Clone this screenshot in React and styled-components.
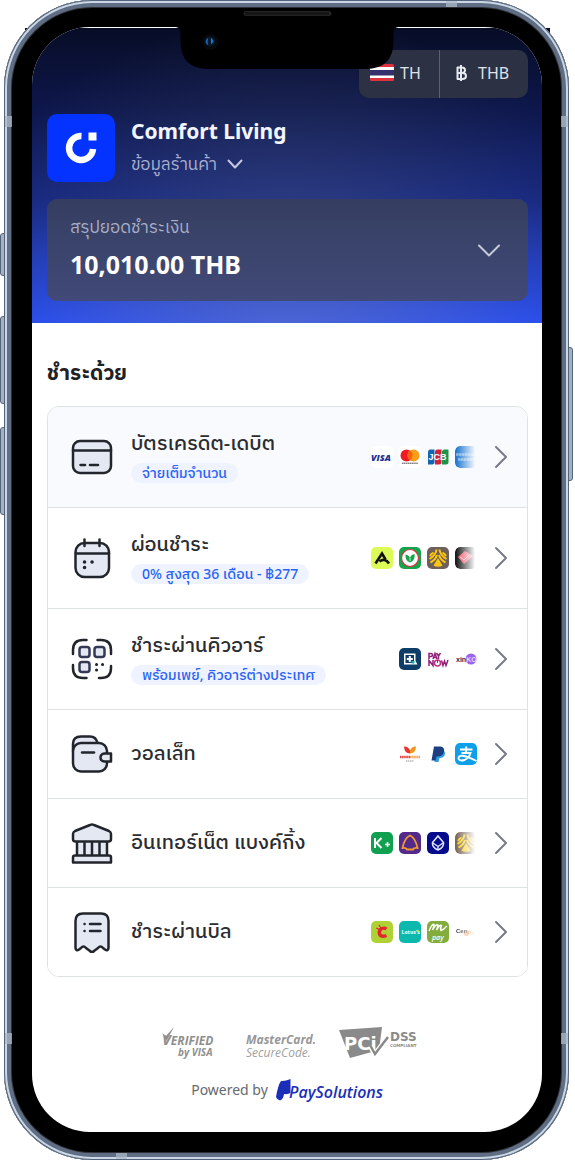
import styled, { createGlobalStyle, css } from "styled-components";

const GlobalStyle = createGlobalStyle`
  * {
    box-sizing: border-box;
  }

  body {
    margin: 0;
    background: #ffffff;
    color: #2b2d31;
    font-family: "Noto Sans", "IBM Plex Sans Thai", "Noto Sans Thai", sans-serif;
  }

  button {
    border: none;
    background: none;
    padding: 0;
    margin: 0;
    font: inherit;
    color: inherit;
    text-align: left;
    cursor: pointer;
  }
`;

/* ---------- device ---------- */

const Page = styled.div`
  padding: 0 6px 3px 4px;
`;

const Phone = styled.div`
  position: relative;
  isolation: isolate;
  padding: 27px 27px 28px 28px;
`;

const Shell = styled.div`
  position: absolute;
  inset: 0;
  z-index: -1;
  border-radius: 88px;
  background: #000000;
  box-shadow:
    inset 0 0 0 1px #54627a,
    inset 0 0 0 3px #cbd7e4,
    inset 0 0 0 7px #5f6e84,
    inset 0 0 0 8px #2c2f33;
`;

const ShellCorners = styled.div`
  position: absolute;
  z-index: -2;
  top: 28px;
  left: 21px;
  right: 19px;
  height: 6px;
  background: #060b28;
`;

const SideKey = styled.span`
  position: absolute;
  top: ${({ $top }) => $top}px;
  height: ${({ $height }) => $height}px;
  width: 5px;
  z-index: -2;
  background: #a3b2c1;
  border: 1px solid #56647a;
  ${({ $side }) =>
    $side === "left"
      ? css`
          left: -4px;
          border-radius: 3px 0 0 3px;
        `
      : css`
          right: -4px;
          border-radius: 0 3px 3px 0;
        `}
`;

const Band = styled.span`
  position: absolute;
  z-index: -1;
  background: rgba(170, 184, 200, 0.75);
  ${({ $edge, $at }) => {
    if ($edge === "left" || $edge === "right")
      return css`
        ${$edge}: 1px;
        ${$at}: 116px;
        width: 7px;
        height: 11px;
      `;
    return css`
      ${$edge}: 1px;
      ${$at}: 112px;
      width: 11px;
      height: 6px;
    `;
  }}
`;

const Notch = styled.svg`
  position: absolute;
  top: 0;
  left: 50%;
  transform: translateX(-50%);
  pointer-events: none;
`;

const Screen = styled.div`
  overflow: hidden;
  border-radius: 58px;
  padding-top: 1px;
  background: #ffffff;
`;

/* ---------- header ---------- */

const Header = styled.header`
  padding: 22px 14px 22px 15px;
  background:
    radial-gradient(
      ellipse 62% 75% at 50% 72%,
      rgba(96, 108, 130, 0.34),
      rgba(96, 108, 130, 0)
    ),
    radial-gradient(
      ellipse 50% 26% at 50% 100%,
      rgba(110, 130, 235, 0.4),
      rgba(110, 130, 235, 0)
    ),
    linear-gradient(
      180deg,
      #070d26 0%,
      #0d174c 28%,
      #152680 58%,
      #213dc0 80%,
      #294ef0 100%
    );
`;

const Toolbar = styled.div`
  display: flex;
  width: max-content;
  height: 48px;
  margin-left: auto;
  border-radius: 10px;
  background: #2c3144;
`;

const ToolButton = styled.button`
  display: flex;
  align-items: center;
  gap: ${({ $gap }) => $gap}px;
  width: ${({ $width }) => $width}px;
  padding: 0 0 3px ${({ $pad }) => $pad}px;
  color: #dfe2ec;
  font-size: 16px;

  & + & {
    border-left: 1px solid #5b6072;
  }
`;

const Store = styled.div`
  display: flex;
  align-items: center;
  gap: 16px;
  margin: 16px 0 17px;
`;

const StoreLogo = styled.svg`
  flex: none;
  border-radius: 10px;
  background: #0433ff;
`;

const StoreName = styled.h1`
  margin: 0;
  color: #f2f5ff;
  font-size: 21px;
  line-height: 32px;
  font-weight: 700;
`;

const StoreInfo = styled.button`
  display: flex;
  align-items: center;
  gap: 10px;
  color: #a9b0d0;
  font-size: 17px;
  line-height: 34px;
`;

const Summary = styled.button`
  display: flex;
  align-items: center;
  justify-content: space-between;
  width: 100%;
  height: 102px;
  padding: 0 27px 0 23px;
  border-radius: 10px;
  background: linear-gradient(180deg, #353e60, #414a78);
`;

const SummaryLabel = styled.span`
  display: block;
  color: #a9afc6;
  font-size: 17px;
  line-height: 28px;
`;

const Amount = styled.strong`
  display: block;
  color: #ffffff;
  font-size: 25px;
  line-height: 46px;
  font-weight: 700;
`;

/* ---------- payment list ---------- */

const Main = styled.main`
  padding: 33px 14px 0 15px;
`;

const Heading = styled.h2`
  margin: 0 0 18px;
  color: #1f2125;
  font-size: 21px;
  line-height: 32px;
  font-weight: 700;
`;

const Methods = styled.ul`
  margin: 0;
  padding: 0;
  list-style: none;
  overflow: hidden;
  border: 1px solid #dde2e5;
  border-radius: 12px;
`;

const Method = styled.li`
  & + & {
    border-top: 1px solid #dde2e5;
  }
`;

const MethodButton = styled.button`
  display: flex;
  align-items: center;
  width: 100%;
  height: ${({ $tall }) => ($tall ? 100 : 88)}px;
  padding: 0 19px 0 23px;
  background: ${({ $active }) => ($active ? "#f8fafd" : "#ffffff")};
`;

const MethodIcon = styled.svg`
  flex: none;
  margin-right: 18px;
  fill: #e3e8f3;
  stroke: #22252c;
  stroke-width: 2.5;
  stroke-linecap: round;
  stroke-linejoin: round;
`;

const MethodText = styled.span`
  flex: 1;
  min-width: 0;
  display: flex;
  flex-direction: column;
  align-items: flex-start;
  gap: 6px;
  padding-bottom: 2px;
`;

const MethodName = styled.span`
  font-size: 20px;
  line-height: 28px;
  font-weight: 500;
  white-space: nowrap;
`;

const Tag = styled.span`
  padding: 0 11px;
  border-radius: 10px;
  background: #eef3ff;
  color: #2a62f5;
  font-size: 14px;
  line-height: 20px;
  font-weight: 500;
  white-space: nowrap;
`;

const Brands = styled.span`
  display: flex;
  gap: 6px;
  margin-right: 17px;
`;

const Brand = styled.svg`
  width: 22px;
  height: 22px;
  border-radius: 5px;
  background: ${({ $bg }) => $bg || "transparent"};
  ${({ $fade }) =>
    $fade &&
    css`
      mask-image: linear-gradient(90deg, #000 5%, transparent 92%);
    `}
`;

/* ---------- footer ---------- */

const Footer = styled.footer`
  display: flex;
  flex-direction: column;
  align-items: center;
  gap: 16px;
  padding: 48px 14px 29px 15px;
`;

const Badges = styled.div`
  display: flex;
  align-items: center;
  gap: 24px;
`;

const Powered = styled.div`
  display: flex;
  align-items: center;
  gap: 8px;
  color: #66696e;
  font-size: 14px;
  line-height: 26px;
`;

const PayLink = styled.a`
  display: flex;
  color: #1a2fb8;
  text-decoration: none;
`;

const Chevron = ({ d, w, h, color, stroke = 2 }) => (
  <svg width={w} height={h} fill="none" stroke={color} strokeWidth={stroke} strokeLinecap="round" strokeLinejoin="round">
    <path d={d} />
  </svg>
);

const icons = {
  card: (
    <>
      <rect x="2" y="5" width="38" height="32" rx="7" />
      <path d="M2 14.5H40M9.500 29H14M19 29H27" />
    </>
  ),
  calendar: (
    <>
      <rect x="4.500" y="6" width="33.500" height="34" rx="9" />
      <path d="M5 16.500H38M13.500 2.500V9M28.500 2.500V9" />
      <path d="M13.500 25h.1M21 25h.1M13.500 30.500h.1" strokeWidth="3.500" />
    </>
  ),
  qr: (
    <>
      <path fill="none" d="M2 16V12Q2 2 12 2H15.500M26.500 2H30Q40 2 40 12V16M2 27V30Q2 40 12 40H15.500M28 40H30Q40 40 40 30V28" />
      <g stroke="#343a55">
        <rect x="8.500" y="9" width="10" height="10" rx="2.500" />
        <rect x="23.500" y="9" width="10" height="10" rx="2.500" />
        <rect x="8.500" y="24" width="10" height="10" rx="2.500" />
      </g>
      <path d="M25.500 26.500h.1M31.500 26.500h.1M25.500 32h.1" strokeWidth="3" />
    </>
  ),
  wallet: (
    <>
      <path d="M2 18V11Q2 3.500 10 3.500H19Q25 3.500 26.500 10" />
      <rect x="2" y="10" width="34" height="28.500" rx="8" />
      <path d="M11 19.500H23" />
      <path d="M33.500 20.500H40V28.500H33.500Q29.500 28 29.500 24.500T33.500 20.500Z" />
    </>
  ),
  bank: (
    <>
      <path d="M6 19H36V34H6Z" stroke="none" />
      <path d="M6 20V33M13.500 20V33M21 20V33M28.500 20V33M36 20V33" />
      <path d="M2 12Q2 10 4 9L19 3Q21 2 23 3L38 9Q40 10 40 12V17Q40 19.500 37.500 19.500H4.500Q2 19.500 2 17Z" />
      <path d="M4 33.500H38Q40 33.500 40 35.500V40.500H2V35.500Q2 33.500 4 33.500Z" />
    </>
  ),
  bill: (
    <>
      <path d="M4.500 10Q4.500 2.500 12 2.500H30Q37.500 2.500 37.500 10V37Q37 40.500 34 38.500L32 37Q29.500 34 27 37L23 40Q21 42 19 40L15 37Q12.500 34 10 37L8 38.500Q5 40.500 4.500 37Z" />
      <path d="M19 13H29.500M19 20H29.500M13.500 13h.1M13.500 20h.1" />
    </>
  ),
};

const brands = {
  visa: (
    <Brand key="visa" viewBox="0 0 22 22" $bg="#fff">
      <text x="0" y="14.500" fontFamily="Open Sans" fontSize="9" fontWeight="800" fontStyle="italic" fill="#1a2f8f">VISA</text>
    </Brand>
  ),
  mastercard: (
    <Brand key="mastercard" viewBox="0 0 22 22" $bg="#fff">
      <circle cx="7.500" cy="9.500" r="6" fill="#eb1c26" />
      <circle cx="14.500" cy="9.500" r="6" fill="#f79e1b" />
      <path d="M11 4.600a6 6 0 0 1 0 9.800a6 6 0 0 1 0-9.800Z" fill="#ff5f00" />
      <path d="M3 17.200H19" stroke="#444" strokeWidth="1" strokeDasharray="1.500 .4" />
    </Brand>
  ),
  jcb: (
    <Brand key="jcb" viewBox="0 0 22 22">
      <path d="M3.500 3.500H7.500V16Q7.500 18.500 5 18.500H1V6Q1 3.500 3.500 3.500Z" fill="#1465b0" />
      <path d="M10.500 3.500H14.500V16Q14.500 18.500 12 18.500H8V6Q8 3.500 10.500 3.500Z" fill="#d0213d" />
      <path d="M17.500 3.500H21.500V16Q21.500 18.500 19 18.500H15V6Q15 3.500 17.500 3.500Z" fill="#1f9447" />
      <text x="1.500" y="14" fontFamily="Liberation Sans" fontSize="9" fontWeight="700" fill="#fff">JCB</text>
    </Brand>
  ),
  amex: (
    <Brand key="amex" viewBox="0 0 22 22" $bg="#1f78d1" $fade>
      <path d="M1 8.500H20M3 13.500H20" stroke="#fff" strokeWidth="2.500" strokeDasharray="2.500 .4" opacity=".45" />
    </Brand>
  ),
  ascend: (
    <Brand key="ascend" viewBox="0 0 22 22" $bg="#dcfb57">
      <path d="M4.500 16.500L11 6.500L14.500 12.500M8.500 14.500Q14 10.500 18 16.500" fill="none" stroke="#111" strokeWidth="2.600" />
    </Brand>
  ),
  kbank: (
    <Brand key="kbank" viewBox="0 0 22 22" $bg="#12a54b">
      <circle cx="11" cy="11" r="8.500" fill="#fff" stroke="#d9333f" strokeWidth="1.200" />
      <path d="M11 15.500Q6 13.500 6.500 7.500Q10 8 11 11Q12 7.500 15.500 7Q16.500 13.500 11 15.500Z" fill="#12a54b" />
      <path d="M11 11V14" stroke="#fff" strokeWidth=".8" />
    </Brand>
  ),
  krungsri: (
    <Brand key="krungsri" viewBox="0 0 22 22" $bg="#6f5f5a">
      <g stroke="#fdc70c" fill="none" strokeWidth="2">
        <path d="M9.500 2.500Q9 8 2.500 12M12.500 2.500Q13 8 19.500 12M10 8Q8.500 13 3.500 15.500M12 8Q13.500 13 18.500 15.500" />
        <path d="M6.500 5.500Q4 7 3 9M15.500 5.500Q18 7 19 9" />
      </g>
      <path d="M11 11L15.500 18.500Q11 21 6.500 18.500Z" fill="#fdc70c" />
    </Brand>
  ),
  ktc: (
    <Brand key="ktc" viewBox="0 0 22 22" $bg="#1d1c1c" $fade>
      <path d="M3 10L10 4L18 9L9 17Z" fill="#f0566a" />
      <path d="M5 10L9 13L14 8" stroke="#fff" strokeWidth="1" fill="none" opacity=".6" />
    </Brand>
  ),
  promptpay: (
    <Brand key="promptpay" viewBox="0 0 22 22" $bg="#0e3d67">
      <path d="M5 5.500H16.500V13L18.500 16.500H5Z" fill="#fff" />
      <path d="M6.500 7H15V15H6.500Z" fill="#0e3d67" />
      <path d="M10.800 8V14M7.800 11H13.800" stroke="#fff" strokeWidth="2" />
      <path d="M12.500 13H15.500V15.500H12.500Z" fill="#17b0a2" />
    </Brand>
  ),
  paynow: (
    <Brand key="paynow" viewBox="0 0 22 22">
      <g fill="none" stroke="#8f2079" strokeWidth="1.500">
        <path d="M2 11V5.500H4Q5.500 5.500 5.500 7T4 8.500H2M6 11L8 5.500L10 11M7 9.500H9M9.500 5L11.500 8L13.500 5M11.500 8V11" />
        <path d="M2 18V12.500L6 17.500V12M14.500 12.500L16 17.500L17.500 13L19 17.500L21 12" />
        <circle cx="10.500" cy="15" r="3" stroke="#c2328a" />
        <path d="M10.500 12V15" strokeWidth="1" />
      </g>
    </Brand>
  ),
  xinko: (
    <Brand key="xinko" viewBox="0 0 22 22">
      <circle cx="16" cy="11" r="5.500" fill="#9b62f0" />
      <text x="1" y="13.500" fontFamily="Liberation Sans" fontSize="7" fontWeight="700" fill="#2b2b55">
        xin<tspan fill="#e7d8ff">KO</tspan>
      </text>
    </Brand>
  ),
  truemoney: (
    <Brand key="truemoney" viewBox="0 0 22 22">
      <path d="M5 3.500Q9 3 11 7.500L11 10.500Q5.500 10.500 5 3.500Z" fill="#e8362d" />
      <path d="M17 3.500Q13 3 11 7.500L11 10.500Q16.500 10.500 17 3.500Z" fill="#f7931d" />
      <path d="M1 14H11" stroke="#e2483d" strokeWidth="2.500" strokeDasharray="1.600 .5" />
      <path d="M11 14H21" stroke="#f5a45c" strokeWidth="2.500" strokeDasharray="1.600 .5" />
      <path d="M7 18H15" stroke="#999" strokeWidth="1" strokeDasharray="1.500 .5" />
    </Brand>
  ),
  paypal: (
    <Brand key="paypal" viewBox="0 0 22 22">
      <path d="M8.500 7H16Q19 9 17.500 12.500Q16 15 12.500 15L11.500 19H7.500Z" fill="#2a9be0" />
      <path d="M7 3.500H14Q18 4.500 17 9Q15.500 13.500 10.500 13.500H9.500L8.500 17.500H4.500Z" fill="#1d3f82" />
    </Brand>
  ),
  alipay: (
    <Brand key="alipay" viewBox="0 0 22 22" $bg="#0f9fe8">
      <g fill="none" stroke="#fff" strokeWidth="1.900">
        <path d="M5 6.500H17.500M11.200 3.500V10M6.500 10H15.500Q14 15 9.500 17Q4.500 18.500 3.500 15.500Q3.500 12.500 7.500 12.800Q12 13.200 21.500 18" />
      </g>
    </Brand>
  ),
  kplus: (
    <Brand key="kplus" viewBox="0 0 22 22" $bg="#10a050">
      <path d="M4 6V16M10.500 6L5.500 11L10.500 16" fill="none" stroke="#fff" strokeWidth="2" />
      <path d="M16.500 10V15M14 12.500H19" stroke="#fff" strokeWidth="1.500" />
    </Brand>
  ),
  scb: (
    <Brand key="scb" viewBox="0 0 22 22" $bg="#53298a">
      <path d="M11 3.500Q16.500 6 18.500 16Q15 15.500 14 17.500H8Q7 15.500 3.500 16Q5.500 6 11 3.500Z" fill="none" stroke="#f09a2e" strokeWidth="1.800" />
    </Brand>
  ),
  bbl: (
    <Brand key="bbl" viewBox="0 0 22 22" $bg="#060b8c">
      <path d="M11 4L16.500 10.500Q17 15.500 11 18Q5 15.500 5.500 10.500Z" fill="none" stroke="#dfe6ff" strokeWidth="1.600" />
      <path d="M6 11L11 14.500L16 11M11 14.500V18" fill="none" stroke="#dfe6ff" strokeWidth="1.400" />
    </Brand>
  ),
  bay: (
    <Brand key="bay" viewBox="0 0 22 22" $bg="#7b6a5c" $fade>
      <g stroke="#ffd21c" fill="none" strokeWidth="2">
        <path d="M9.500 2.500Q9 8 2.500 12M12.500 2.500Q13 8 19.500 12M10 8Q8.500 13 3.500 15.500M12 8Q13.500 13 18.500 15.500" />
        <path d="M6.500 5.500Q4 7 3 9M15.500 5.500Q18 7 19 9" />
      </g>
      <path d="M11 11L15.500 18.500Q11 21 6.500 18.500Z" fill="#ffd21c" />
    </Brand>
  ),
  bigc: (
    <Brand key="bigc" viewBox="0 0 22 22" $bg="#afd136">
      <path d="M15.500 8Q13.500 6.500 11 7.500Q7.500 9 8.500 13Q10 16.500 15.500 14.500" fill="none" stroke="#e3262d" strokeWidth="3.400" />
      <path d="M5 7L9 8.500M8 4L10 7" stroke="#e3262d" strokeWidth="1.200" />
    </Brand>
  ),
  lotus: (
    <Brand key="lotus" viewBox="0 0 22 22" $bg="#0bb8ae">
      <text x="2.500" y="12.800" fontFamily="Open Sans" fontSize="5" fontWeight="800" fill="#d7f7f2">Lotus's</text>
      <circle cx="19" cy="10" r="1.200" fill="#c6dc3c" />
    </Brand>
  ),
  mpay: (
    <Brand key="mpay" viewBox="0 0 22 22" $bg="#82ad3d">
      <path d="M2 10Q5 2.500 7 3.500Q7 6 5.500 9Q9 2.500 11 4Q11 6 9.500 9Q13 3 14.500 4.500Q13 8 14 9.500Q16 9 20 5" fill="none" stroke="#fff" strokeWidth="1.500" />
      <text x="5" y="18.500" fontFamily="Open Sans" fontSize="7" fontWeight="600" fontStyle="italic" fill="#fff">pay</text>
    </Brand>
  ),
  cenpay: (
    <Brand key="cenpay" viewBox="0 0 22 22" $fade>
      <circle cx="11.500" cy="12" r="3" fill="#f59c5a" opacity=".8" />
      <text x="1" y="12" fontFamily="Liberation Sans" fontSize="6" fontWeight="700" fill="#333">
        Cen<tspan dy="2" fill="#d9762f">Pay</tspan>
      </text>
    </Brand>
  ),
};

const methods = [
  { icon: "card", name: "บัตรเครดิต-เดบิต", tag: "จ่ายเต็มจำนวน", logos: ["visa", "mastercard", "jcb", "amex"], active: true },
  { icon: "calendar", name: "ผ่อนชำระ", tag: "0% สูงสุด 36 เดือน - ฿277", logos: ["ascend", "kbank", "krungsri", "ktc"] },
  { icon: "qr", name: "ชำระผ่านคิวอาร์", tag: "พร้อมเพย์, คิวอาร์ต่างประเทศ", logos: ["promptpay", "paynow", "xinko"] },
  { icon: "wallet", name: "วอลเล็ท", logos: ["truemoney", "paypal", "alipay"] },
  { icon: "bank", name: "อินเทอร์เน็ต แบงค์กิ้ง", logos: ["kplus", "scb", "bbl", "bay"] },
  { icon: "bill", name: "ชำระผ่านบิล", logos: ["bigc", "lotus", "mpay", "cenpay"] },
];

const StoreHeader = () => (
  <Header>
    <Toolbar>
      <ToolButton $width={80} $pad={11} $gap={6}>
        <svg width="24" height="17" viewBox="0 0 24 17">
          <rect width="24" height="17" rx="1.500" fill="#e0313f" />
          <rect y="3" width="24" height="11" fill="#fff" />
          <rect y="6" width="24" height="5.500" fill="#33306b" />
        </svg>
        TH
      </ToolButton>
      <ToolButton $width={89} $pad={15} $gap={11}>
        <svg width="12" height="18" viewBox="0 0 12 18" fill="none" stroke="#e8eaf2" strokeWidth="2">
          <path d="M2 3.500H7Q10 3.500 10 6.200T7 9H2M2 9H7.500Q11 9 11 12T7.500 15H2M2.500 3V15.500M6 1V17" />
        </svg>
        THB
      </ToolButton>
    </Toolbar>
    <Store>
      <StoreLogo width="68" height="68" viewBox="0 0 68 68">
        <path d="M34.500 22A12 12 0 1 0 46 35" fill="none" stroke="#fff" strokeWidth="6.500" />
        <rect x="41.500" y="18.500" width="8" height="8" fill="#fff" />
      </StoreLogo>
      <div>
        <StoreName>Comfort Living</StoreName>
        <StoreInfo>
          ข้อมูลร้านค้า
          <Chevron w={16} h={10} d="M1.500 1.500L8 8.500L14.500 1.500" color="#c3c9e0" />
        </StoreInfo>
      </div>
    </Store>
    <Summary>
      <span>
        <SummaryLabel>สรุปยอดชำระเงิน</SummaryLabel>
        <Amount>10,010.00 THB</Amount>
      </span>
      <Chevron w={24} h={13} d="M2 1.500L12 11.500L22 1.500" color="#c6cad8" />
    </Summary>
  </Header>
);

const PaymentMethods = () => (
  <Main>
    <Heading>ชำระด้วย</Heading>
    <Methods>
      {methods.map(({ icon, name, tag, logos, active }) => (
        <Method key={icon}>
          <MethodButton $tall={Boolean(tag)} $active={active}>
            <MethodIcon width="42" height="42" viewBox="0 0 42 42">
              {icons[icon]}
            </MethodIcon>
            <MethodText>
              <MethodName>{name}</MethodName>
              {tag && <Tag>{tag}</Tag>}
            </MethodText>
            <Brands>{logos.map((logo) => brands[logo])}</Brands>
            <Chevron w={14} h={24} d="M2 2L12 12L2 22" color="#777a88" />
          </MethodButton>
        </Method>
      ))}
    </Methods>
  </Main>
);

const PageFooter = () => (
  <Footer>
    <Badges>
      <svg width="60" height="36" viewBox="0 0 60 36" fill="#8f8f8f">
        <g fontFamily="Open Sans" fontWeight="700" fontStyle="italic">
          <text x="5" y="20" fontSize="12">
            <tspan fontSize="15">V</tspan>ERIFIED
          </text>
          <text x="21" y="31" fontSize="10">by VISA</text>
        </g>
        <path d="M5 8L9 11L17 2L9.500 16Z" />
      </svg>
      <svg width="74" height="36" viewBox="0 0 74 36" fontFamily="Open Sans" fontStyle="italic">
        <text x="5" y="19" fontSize="12" fontWeight="700" fill="#979797">MasterCard.</text>
        <text x="5" y="32" fontSize="12" fontWeight="400" fill="#a0a0a0">SecureCode.</text>
      </svg>
      <svg width="80" height="36" viewBox="0 0 80 36">
        <path d="M0 5L43 2L40 25L11 33Z" fill="#8a8a8a" />
        <text x="5" y="25" fontFamily="DejaVu Sans" fontSize="18" fontWeight="700" fill="#fff">PCi</text>
        <path d="M31 21L36 29L49 12" fill="none" stroke="#fff" strokeWidth="5" />
        <path d="M31 20L36 29L49 12" fill="none" stroke="#8a8a8a" strokeWidth="2.500" />
        <text x="51" y="16" fontFamily="DejaVu Sans" fontSize="12" fontWeight="700" fill="#8a8a8a">DSS</text>
        <text x="51" y="22" fontFamily="DejaVu Sans" fontSize="4" fontWeight="700" fill="#8a8a8a">COMPLIANT</text>
      </svg>
    </Badges>
    <Powered>
      Powered by
      <PayLink href="#" aria-label="PaySolutions">
        <svg width="108" height="26" viewBox="0 0 108 26" fill="currentColor">
          <path d="M5 4Q9 4.500 14.500 2V16Q12 17.500 8 17Q7.500 22 4 23.500Q1 23 0 20Q2 8 5 4Z" />
          <text x="13" y="21" fontFamily="Open Sans" fontSize="16" fontWeight="600" fontStyle="italic">PaySolutions</text>
        </svg>
      </PayLink>
    </Powered>
  </Footer>
);

const App = () => (
  <>
    <GlobalStyle />
    <Page>
      <Phone>
        <ShellCorners />
        <SideKey $side="left" $top={233} $height={43} />
        <SideKey $side="left" $top={316} $height={88} />
        <SideKey $side="left" $top={427} $height={88} />
        <SideKey $side="right" $top={347} $height={134} />
        <Shell />
        <Band $edge="left" $at="top" />
        <Band $edge="right" $at="top" />
        <Band $edge="left" $at="bottom" />
        <Band $edge="right" $at="bottom" />
        <Band $edge="top" $at="right" />
        <Band $edge="bottom" $at="left" />
        <Screen>
          <StoreHeader />
          <PaymentMethods />
          <PageFooter />
        </Screen>
        <Notch width="223" height="69" viewBox="0 0 223 69">
          <path d="M0 26H223V27Q218 27 218 33V41Q218 69 190 69H33Q5 69 5 41V33Q5 27 0 27Z" fill="#000" />
          <rect x="68" y="11" width="88" height="5" rx="2.500" fill="#232323" />
          <path d="M70 13.500H154" stroke="#0a0a0a" strokeWidth="3" strokeDasharray="1 1" />
          <circle cx="35" cy="42" r="8" fill="#08090c" />
          <circle cx="34.500" cy="41.500" r="5" fill="#071a30" />
          <path d="M32 38.500Q29.500 41.500 32 44.500M36 38.500Q39 41.500 36 43.500Z" fill="#1a78c8" stroke="#1a78c8" />
        </Notch>
      </Phone>
    </Page>
  </>
);

export default App;
